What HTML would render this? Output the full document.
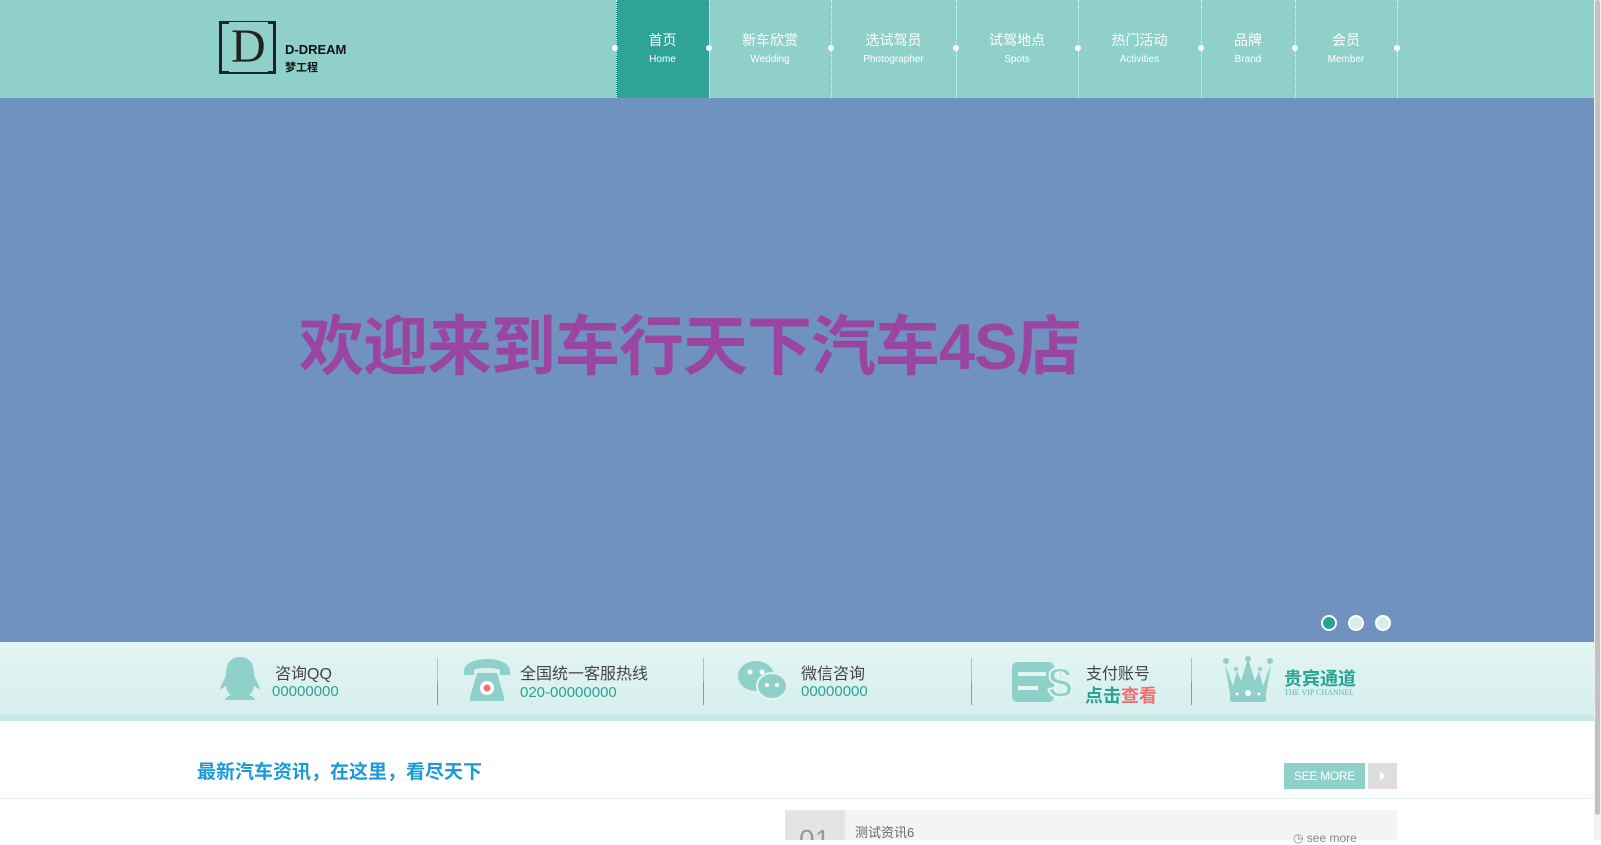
<!DOCTYPE html>
<html><head><meta charset="utf-8"><style>
*{margin:0;padding:0;box-sizing:border-box}
body{width:1601px;height:840px;overflow:hidden;background:#fff;font-family:"Liberation Sans","Noto Sans CJK SC",sans-serif;position:relative}
.abs{position:absolute}
#hdr{left:0;top:0;width:1594px;height:98px;background:#8fd0ca}
.tab{position:absolute;top:0;height:98px;text-align:center;color:#fff}
.tab b{display:block;font-weight:normal;font-size:14px;margin-top:30px}
.tab i{display:block;font-style:normal;font-size:10px;margin-top:4px}
.sep{position:absolute;top:0;height:98px;border-left:1px dotted #fff}
.dot{position:absolute;top:45px;width:6px;height:6px;border-radius:3px;background:#fff}
#ban{left:0;top:98px;width:1594px;height:544px;background:#6f92bf}
#info{left:0;top:642px;width:1594px;height:73px;background:linear-gradient(#e2f5f3,#d6efec)}
.vl{position:absolute;top:658px;width:1px;height:47px;background:linear-gradient(#8fd0ca 50%,#f07070 50%)}
.t1{font-size:16px;color:#444}
.t2{font-size:15px;color:#2aa396}
</style></head><body>
<div id="hdr" class="abs"></div>
<div class="abs" style="left:219px;top:21px;width:57px;height:53px;border:3px solid #222"></div>
<div class="abs" style="left:229px;top:22px;font-family:'Liberation Serif',serif;font-size:48px;color:#222;line-height:50px;background:#8fd0ca;padding:0 2px">D</div>
<div class="abs" style="left:285px;top:42px;font-size:13px;font-weight:bold;color:#111">D-DREAM</div>
<div class="abs" style="left:285px;top:59px;font-size:11px;font-weight:bold;color:#111">梦工程</div>
<div class="abs" style="left:616px;top:0;width:93px;height:98px;background:#30a399"></div>
<div class="tab" style="left:616px;width:93px"><b>首页</b><i>Home</i></div>
<div class="tab" style="left:709px;width:122px"><b>新车欣赏</b><i>Wedding</i></div>
<div class="tab" style="left:831px;width:125px"><b>选试驾员</b><i>Photographer</i></div>
<div class="tab" style="left:956px;width:122px"><b>试驾地点</b><i>Spots</i></div>
<div class="tab" style="left:1078px;width:123px"><b>热门活动</b><i>Activities</i></div>
<div class="tab" style="left:1201px;width:94px"><b>品牌</b><i>Brand</i></div>
<div class="tab" style="left:1295px;width:102px"><b>会员</b><i>Member</i></div>
<div class="sep" style="left:616px"></div><div class="sep" style="left:709px"></div><div class="sep" style="left:831px"></div><div class="sep" style="left:956px"></div><div class="sep" style="left:1078px"></div><div class="sep" style="left:1201px"></div><div class="sep" style="left:1295px"></div><div class="sep" style="left:1397px"></div>
<div class="dot" style="left:612px"></div><div class="dot" style="left:706px"></div><div class="dot" style="left:828px"></div><div class="dot" style="left:953px"></div><div class="dot" style="left:1075px"></div><div class="dot" style="left:1198px"></div><div class="dot" style="left:1292px"></div><div class="dot" style="left:1394px"></div>
<div id="ban" class="abs"></div>
<div class="abs" style="left:299px;top:294px;font-size:65px;font-weight:bold;color:#9b45a3;letter-spacing:-1px;white-space:nowrap">欢迎来到车行天下汽车4S店</div>
<div class="abs" style="left:1321px;top:615px;width:16px;height:16px;border-radius:8px;background:#2aa396;border:2px solid #fff"></div>
<div class="abs" style="left:1348px;top:615px;width:16px;height:16px;border-radius:8px;background:#d8eeeb;border:2px solid #fff"></div>
<div class="abs" style="left:1375px;top:615px;width:16px;height:16px;border-radius:8px;background:#d8eeeb;border:2px solid #fff"></div>
<div id="info" class="abs"></div>
<div class="abs" style="left:0;top:715px;width:1594px;height:6px;background:#c5e8e4"></div>
<svg class="abs" style="left:215px;top:655px" width="50" height="48" viewBox="0 0 50 48"><path d="M25 2c-10 0-14 8-14 16 0 5-4 9-6 16 3 0 5-3 6-4 0 4 2 8 5 10-3 1-6 3-6 5h30c0-2-3-4-6-5 3-2 5-6 5-10 1 1 3 4 6 4-2-7-6-11-6-16 0-8-4-16-14-16z" fill="#8fd0ca"/></svg>
<div class="abs t1" style="left:275px;top:660px">咨询QQ</div>
<div class="abs t2" style="left:272px;top:683px">00000000</div>
<div class="vl" style="left:437px"></div>
<svg class="abs" style="left:462px;top:657px" width="50" height="48" viewBox="0 0 50 48"><path d="M2 14c0-8 12-12 23-12s23 4 23 12v4h-10v-5c-4-2-9-2-13-2s-9 0-13 2v5H2z" fill="#8fd0ca"/><path d="M15 16l-7 24v4h34v-4l-7-24z" fill="#8fd0ca"/><circle cx="25" cy="31" r="7" fill="#fff"/><circle cx="25" cy="31" r="3.5" fill="#f07070"/></svg>
<div class="abs t1" style="left:520px;top:660px">全国统一客服热线</div>
<div class="abs t2" style="left:520px;top:684px">020-00000000</div>
<div class="vl" style="left:703px"></div>
<svg class="abs" style="left:737px;top:660px" width="52" height="42" viewBox="0 0 52 42"><ellipse cx="19" cy="16" rx="18" ry="15" fill="#8fd0ca"/><ellipse cx="35" cy="26" rx="15" ry="13" fill="#8fd0ca" stroke="#e2f5f3" stroke-width="2"/><circle cx="13" cy="12" r="2.5" fill="#fff"/><circle cx="25" cy="12" r="2.5" fill="#fff"/><circle cx="30" cy="25" r="2" fill="#fff"/><circle cx="40" cy="25" r="2" fill="#fff"/></svg>
<div class="abs t1" style="left:801px;top:660px">微信咨询</div>
<div class="abs t2" style="left:801px;top:683px">00000000</div>
<div class="vl" style="left:971px"></div>
<svg class="abs" style="left:1010px;top:658px" width="64" height="48" viewBox="0 0 64 48"><rect x="2" y="4" width="42" height="40" rx="5" fill="#8fd0ca"/><rect x="8" y="14" width="28" height="4" fill="#e2f5f3"/><rect x="8" y="28" width="20" height="4" fill="#e2f5f3"/><text x="38" y="40" font-family="Liberation Sans" font-weight="bold" font-size="44" fill="#8fd0ca" stroke="#e2f5f3" stroke-width="2">$</text></svg>
<div class="abs t1" style="left:1086px;top:660px">支付账号</div>
<div class="abs" style="left:1085px;top:682px;font-size:18px;font-weight:bold"><span style="color:#2aa396">点击</span><span style="color:#f07070">查看</span></div>
<div class="vl" style="left:1191px"></div>
<svg class="abs" style="left:1222px;top:656px" width="52" height="48" viewBox="0 0 52 48"><circle cx="4" cy="5" r="3" fill="#8fd0ca"/><circle cx="26" cy="3" r="3" fill="#8fd0ca"/><circle cx="48" cy="5" r="3" fill="#8fd0ca"/><circle cx="14" cy="13" r="2" fill="#8fd0ca"/><circle cx="38" cy="13" r="2" fill="#8fd0ca"/><path d="M3 8l5 30h36l5-30-8 22-4-15-4 10-7-22-7 22-4-10-4 15z" fill="#8fd0ca"/><rect x="8" y="30" width="36" height="16" rx="2" fill="#8fd0ca"/><circle cx="26" cy="37" r="3" fill="#fff"/><circle cx="15" cy="38" r="1.5" fill="#fff"/><circle cx="37" cy="38" r="1.5" fill="#fff"/></svg>
<div class="abs" style="left:1284px;top:665px;font-size:18px;font-weight:bold;color:#2aa396">贵宾通道</div>
<div class="abs" style="left:1284px;top:688px;font-size:8px;color:#5ab5ab;font-family:'Liberation Serif',serif">THE VIP CHANNEL</div>
<div class="abs" style="left:197px;top:757px;font-size:19px;font-weight:bold;color:#1a9ad6">最新汽车资讯，在这里，看尽天下</div>
<div class="abs" style="left:1284px;top:763px;width:81px;height:26px;background:#8fd0ca;color:#fff;font-size:12px;letter-spacing:-0.3px;line-height:26px;text-align:center">SEE MORE</div>
<div class="abs" style="left:1368px;top:763px;width:29px;height:26px;background:#ddd"></div>
<div class="abs" style="left:1380px;top:771px;width:0;height:0;border-left:5px solid #fff;border-top:5px solid transparent;border-bottom:5px solid transparent"></div>
<div class="abs" style="left:0;top:798px;width:1594px;height:1px;background:#dff2f0"></div>
<div class="abs" style="left:785px;top:810px;width:612px;height:30px;background:#f4f4f4"></div>
<div class="abs" style="left:785px;top:810px;width:60px;height:30px;background:#e4e4e4;color:#999;font-size:28px;padding:14px 0 0 14px;overflow:hidden">01</div>
<div class="abs" style="left:855px;top:822px;font-size:13px;color:#666">测试资讯6</div>
<div class="abs" style="left:1293px;top:831px;font-size:12px;color:#888">◷ see more</div>
<div class="abs" style="left:1594px;top:0;width:7px;height:840px;background:#f1f1f1"></div>
<div class="abs" style="left:1595px;top:0;width:5px;height:815px;background:#c1c1c1;border-radius:3px"></div>
</body></html>
